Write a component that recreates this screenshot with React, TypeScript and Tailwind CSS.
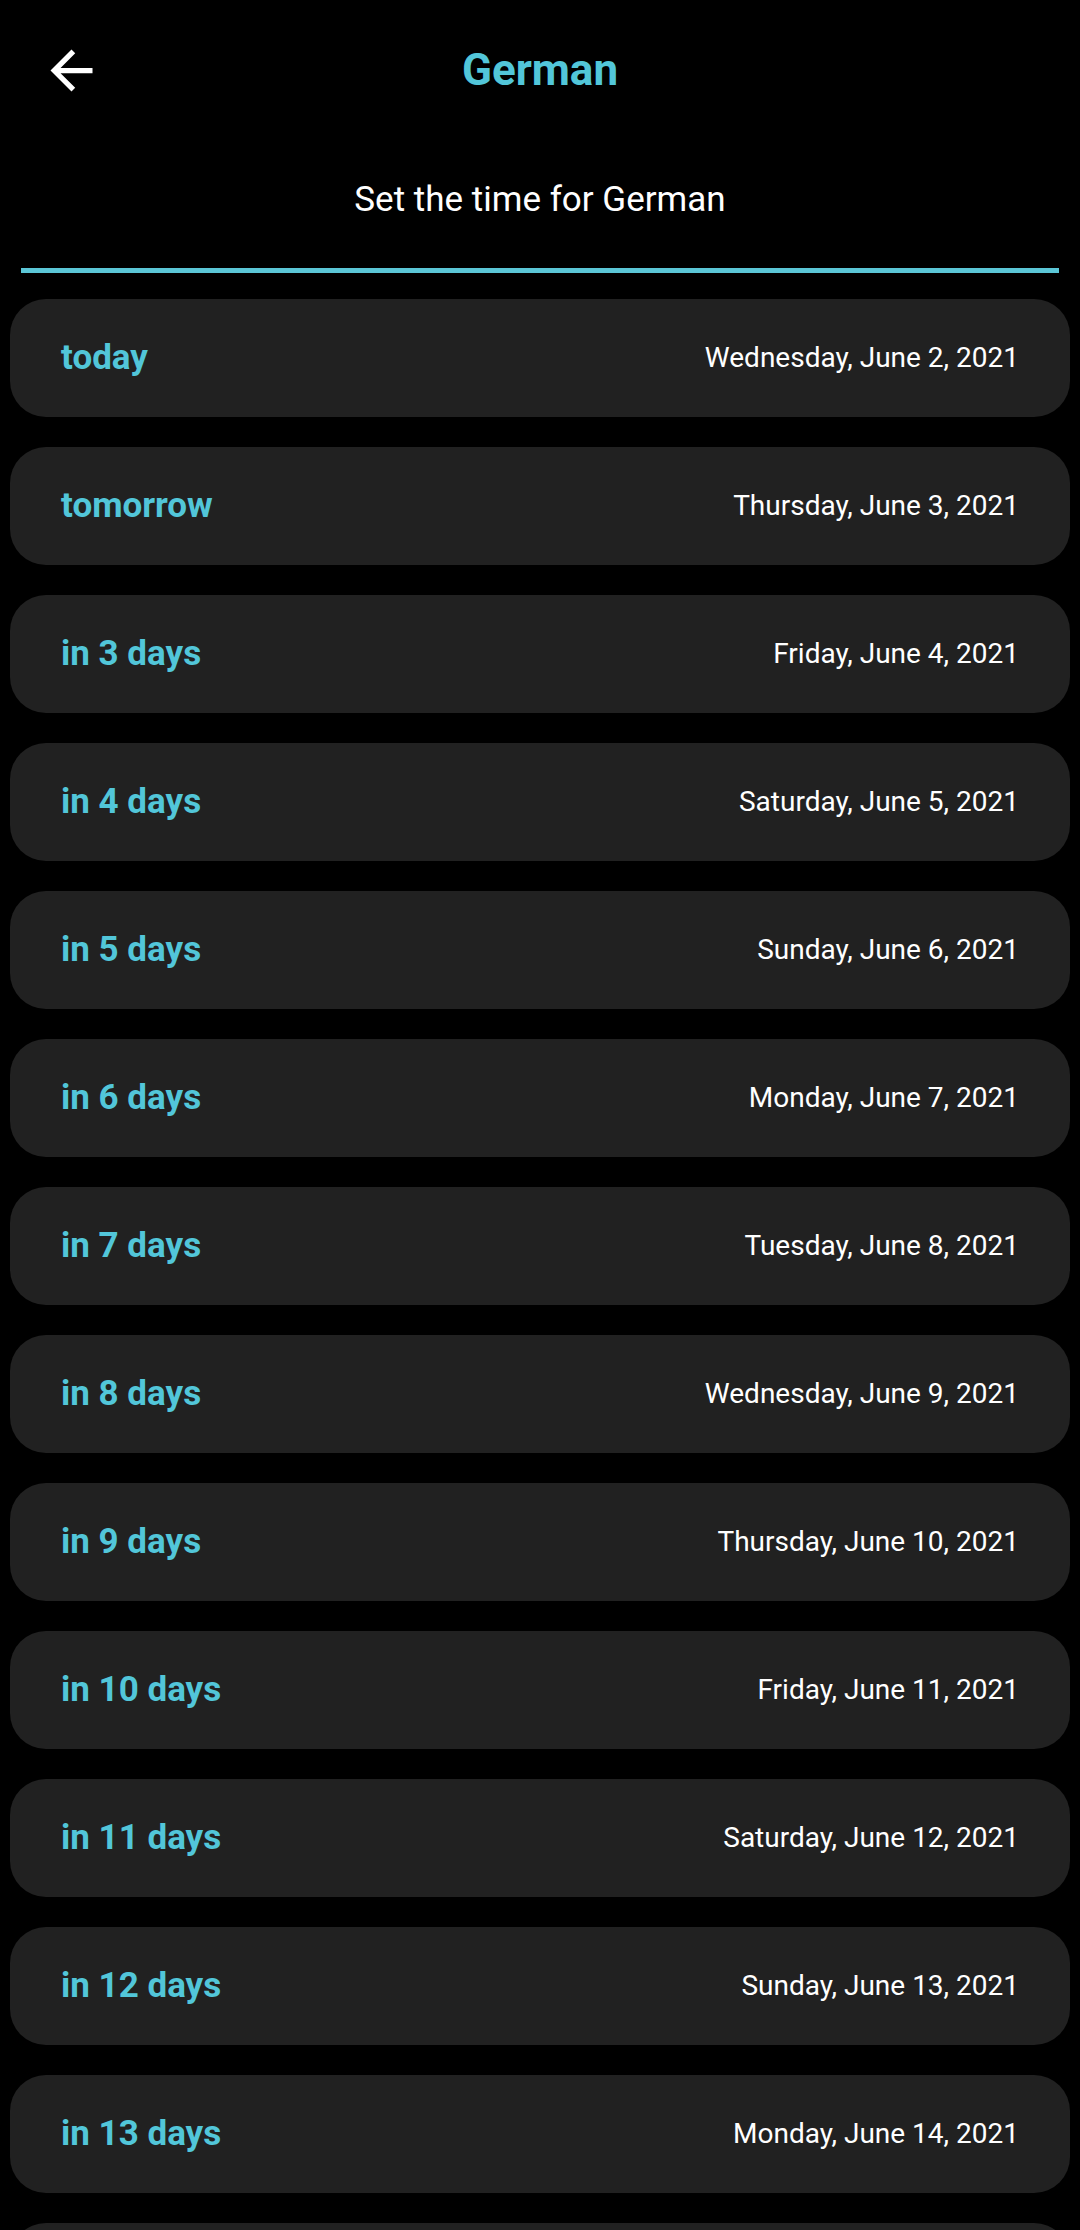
const days = [
  { label: 'today', date: 'Wednesday, June 2, 2021' },
  { label: 'tomorrow', date: 'Thursday, June 3, 2021' },
  { label: 'in 3 days', date: 'Friday, June 4, 2021' },
  { label: 'in 4 days', date: 'Saturday, June 5, 2021' },
  { label: 'in 5 days', date: 'Sunday, June 6, 2021' },
  { label: 'in 6 days', date: 'Monday, June 7, 2021' },
  { label: 'in 7 days', date: 'Tuesday, June 8, 2021' },
  { label: 'in 8 days', date: 'Wednesday, June 9, 2021' },
  { label: 'in 9 days', date: 'Thursday, June 10, 2021' },
  { label: 'in 10 days', date: 'Friday, June 11, 2021' },
  { label: 'in 11 days', date: 'Saturday, June 12, 2021' },
  { label: 'in 12 days', date: 'Sunday, June 13, 2021' },
  { label: 'in 13 days', date: 'Monday, June 14, 2021' },
]

function BackArrow() {
  return (
    <svg width="63" height="63" viewBox="0 0 24 24" fill="#ffffff" aria-hidden="true">
      <path d="M20 11H7.83l5.59-5.59L12 4l-8 8 8 8 1.41-1.41L7.83 13H20v-2z" />
    </svg>
  )
}

function DayRow({ label, date }: { label: string; date: string }) {
  return (
    <div className="flex h-[118px] shrink-0 items-center justify-between rounded-[36px] bg-[#212121] pl-[51px] pr-[51px]">
      <span className="text-[35px] leading-[40px] font-bold text-[#52c6d9]">{label}</span>
      <span className="text-[28px] leading-[34px] text-white">{date}</span>
    </div>
  )
}

export default function App() {
  return (
    <div
      className="flex h-[2230px] w-[1080px] flex-col overflow-hidden bg-black"
      style={{ fontFamily: 'Roboto, "Noto Sans", "Liberation Sans", sans-serif' }}
    >
      <header className="flex h-[140px] shrink-0 items-center">
        <div className="flex w-[110px] pl-[40px]">
          <BackArrow />
        </div>
        <h1 className="flex-1 text-center text-[44px] leading-[50px] font-bold text-[#52c6d9]">German</h1>
        <div className="w-[110px]" />
      </header>

      <p className="mt-[40px] shrink-0 text-center text-[35px] leading-[40px] text-white">Set the time for German</p>

      <div className="mx-[21px] mt-[48px] h-[5px] shrink-0 bg-[#5bc6d6]" />

      <div className="mx-[10px] mt-[26px] flex flex-col gap-[30px]">
        {days.map((d) => (
          <DayRow key={d.label} label={d.label} date={d.date} />
        ))}
        {/* next row, only its top edge shows above the fold */}
        <div className="h-[118px] shrink-0 rounded-[36px] bg-[#212121]" />
      </div>
    </div>
  )
}
